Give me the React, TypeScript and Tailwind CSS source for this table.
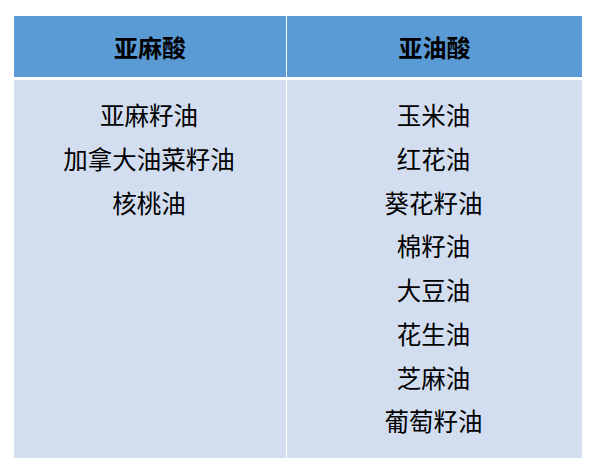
const LINOLENIC = ['亚麻籽油', '加拿大油菜籽油', '核桃油'];
const LINOLEIC = ['玉米油', '红花油', '葵花籽油', '棉籽油', '大豆油', '花生油', '芝麻油', '葡萄籽油'];

const font = { fontFamily: '"Microsoft YaHei", "Noto Sans CJK SC", sans-serif' };

function OilList({ items }: { items: string[] }) {
  return (
    <div className="flex flex-col items-center pt-[13px] pr-[2px]">
      {items.map((item) => (
        <div key={item} className="text-[24.5px] leading-[43.75px] text-black">
          {item}
        </div>
      ))}
    </div>
  );
}

export default function App() {
  return (
    <div className="w-[596px] h-[472px] bg-white pt-4 pl-[14px]" style={font}>
      <div className="grid grid-cols-[272px_295px] gap-x-px gap-y-[3px] w-[568px]">
        <div className="h-[61px] bg-[#5b9bd5] flex items-center justify-center text-[24px] font-bold text-black">
          亚麻酸
        </div>
        <div className="h-[61px] bg-[#5b9bd5] flex items-center justify-center text-[24px] font-bold text-black">
          亚油酸
        </div>
        <div className="h-[378px] bg-[#d2ddef]">
          <OilList items={LINOLENIC} />
        </div>
        <div className="h-[378px] bg-[#d2ddef]">
          <OilList items={LINOLEIC} />
        </div>
      </div>
    </div>
  );
}
